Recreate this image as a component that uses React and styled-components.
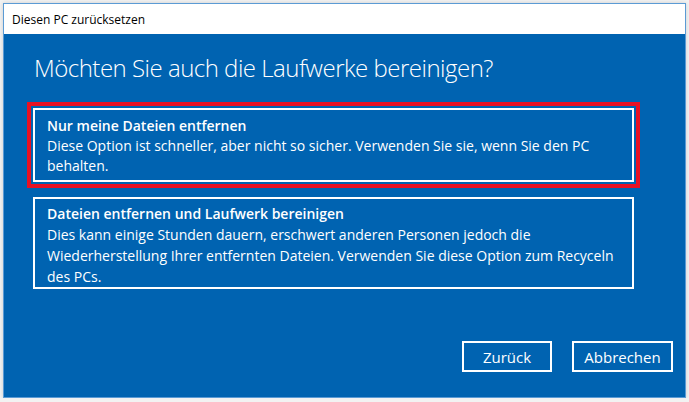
import React from 'react'
import styled, { createGlobalStyle } from 'styled-components'

const Global = createGlobalStyle`
  html, body {
    margin: 0;
    padding: 0;
    background: #f2f2f2;
  }
  body {
    font-family: "Open Sans", "Noto Sans", sans-serif;
  }
`

const Frame = styled.div`
  box-sizing: border-box;
  margin: 3px 0 0 3px;
  width: 683px;
  height: 395px;
  border: 1px solid #5b9bd5;
  display: flex;
  flex-direction: column;
  box-shadow: 0 0 4px rgba(0, 0, 0, .15);
`

const TitleBar = styled.div`
  height: 30px;
  background: #fff;
  display: flex;
  align-items: center;
  padding-left: 8px;
  font-size: 12px;
  color: #000;
`

const Body = styled.div`
  flex: 1;
  background: #0063b1;
  color: #fff;
  display: flex;
  flex-direction: column;
  padding: 0 12px 0 29px;
`

const Heading = styled.h1`
  margin: 18px 0 0 1px;
  font-size: 24px;
  font-weight: 300;
  line-height: 32px;
  letter-spacing: -0.5px;
`

const Options = styled.div`
  display: flex;
  flex-direction: column;
  gap: 15px;
  margin-top: 24px;
`

const Option = styled.div`
  box-sizing: border-box;
  width: 601px;
  border: 2px solid #fff;
  padding: ${p => p.$selected ? '6px 12px 4px' : '4px 12px 0'};
  outline: ${p => p.$selected ? '4px solid #e81123' : 'none'};
  outline-offset: 2px;
  font-size: 14px;
  line-height: ${p => p.$selected ? 20 : 21}px;
`

const OptionTitle = styled.div`
  font-weight: 600;
`

const Footer = styled.div`
  margin-top: auto;
  margin-bottom: 25px;
  display: flex;
  justify-content: flex-end;
  gap: 20px;
`

const Button = styled.button`
  box-sizing: border-box;
  height: 31px;
  min-width: ${p => p.$w}px;
  border: 2px solid #fff;
  background: transparent;
  color: #fff;
  font-family: inherit;
  font-size: 15px;
  padding: 0 10px;
`

export default function App() {
  return (
    <>
      <Global />
      <Frame>
        <TitleBar>Diesen PC zurücksetzen</TitleBar>
        <Body>
          <Heading>Möchten Sie auch die Laufwerke bereinigen?</Heading>
          <Options>
            <Option $selected>
              <OptionTitle>Nur meine Dateien entfernen</OptionTitle>
              Diese Option ist schneller, aber nicht so sicher. Verwenden Sie sie, wenn Sie den PC behalten.
            </Option>
            <Option>
              <OptionTitle>Dateien entfernen und Laufwerk bereinigen</OptionTitle>
              Dies kann einige Stunden dauern, erschwert anderen Personen jedoch die Wiederherstellung Ihrer entfernten Dateien. Verwenden Sie diese Option zum Recyceln des PCs.
            </Option>
          </Options>
          <Footer>
            <Button $w={90}>Zurück</Button>
            <Button $w={101}>Abbrechen</Button>
          </Footer>
        </Body>
      </Frame>
    </>
  )
}
